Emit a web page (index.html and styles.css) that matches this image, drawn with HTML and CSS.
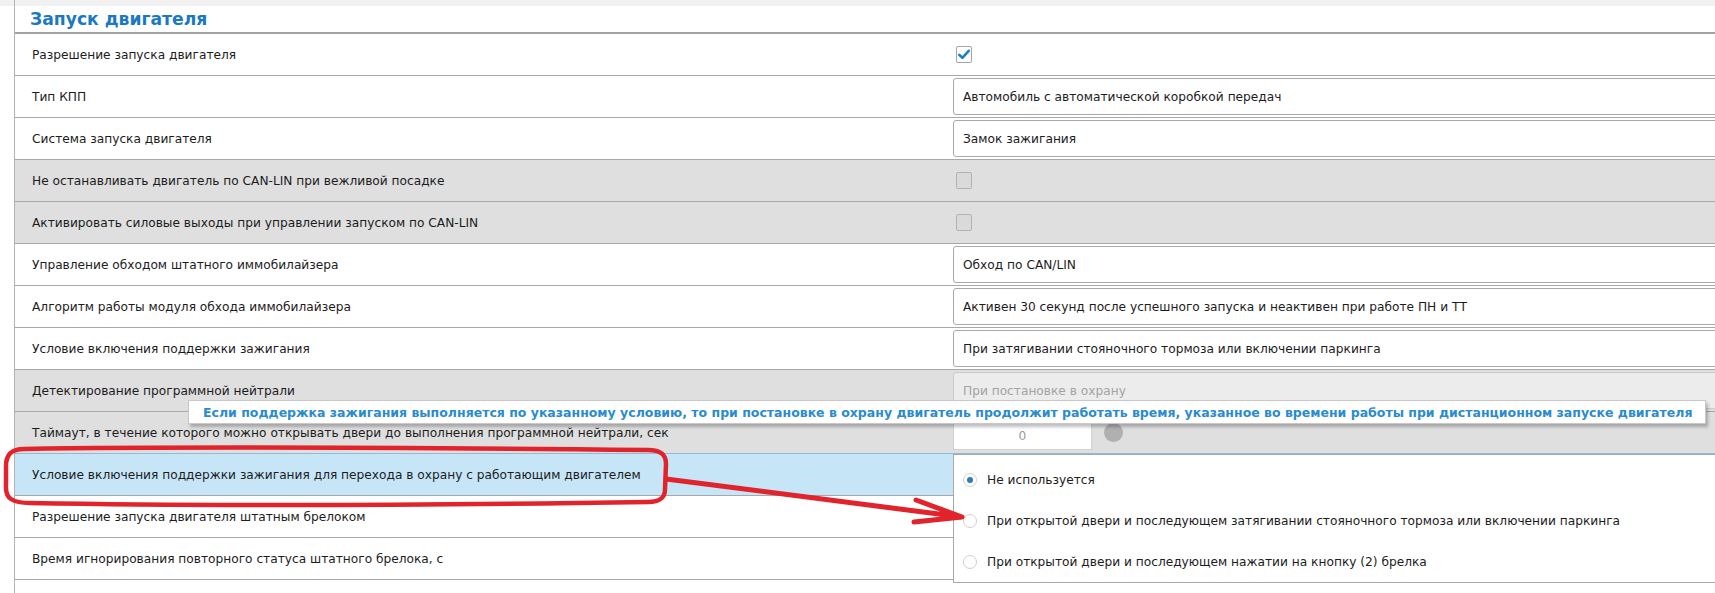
FILE: index.html
```html
<!DOCTYPE html>
<html lang="ru">
<head>
<meta charset="utf-8">
<title>Запуск двигателя</title>
<link rel="stylesheet" href="styles.css">
</head>
<body>
<div class="frame">
  <div class="topstrip"></div>
  <div class="section-title">Запуск двигателя</div>

  <div class="row">
    <div class="label">Разрешение запуска двигателя</div>
    <div class="value">
      <span class="check checked">
        <svg viewBox="0 0 16 16" width="15" height="15"><path d="M2.6 8.4 L6.2 11.8 L13.4 3.8" fill="none" stroke="#1e7fc4" stroke-width="3" stroke-linecap="round" stroke-linejoin="round"/></svg>
      </span>
    </div>
  </div>

  <div class="row">
    <div class="label">Тип КПП</div>
    <div class="value"><div class="input">Автомобиль с автоматической коробкой передач</div></div>
  </div>

  <div class="row">
    <div class="label">Система запуска двигателя</div>
    <div class="value"><div class="input">Замок зажигания</div></div>
  </div>

  <div class="row disabled">
    <div class="label">Не останавливать двигатель по CAN-LIN при вежливой посадке</div>
    <div class="value"><span class="check off"></span></div>
  </div>

  <div class="row disabled">
    <div class="label">Активировать силовые выходы при управлении запуском по CAN-LIN</div>
    <div class="value"><span class="check off"></span></div>
  </div>

  <div class="row">
    <div class="label">Управление обходом штатного иммобилайзера</div>
    <div class="value"><div class="input">Обход по CAN/LIN</div></div>
  </div>

  <div class="row">
    <div class="label">Алгоритм работы модуля обхода иммобилайзера</div>
    <div class="value"><div class="input">Активен 30 секунд после успешного запуска и неактивен при работе ПН и ТТ</div></div>
  </div>

  <div class="row">
    <div class="label">Условие включения поддержки зажигания</div>
    <div class="value"><div class="input">При затягивании стояночного тормоза или включении паркинга</div></div>
  </div>

  <div class="row disabled">
    <div class="label">Детектирование программной нейтрали</div>
    <div class="value"><div class="input input-off">При постановке в охрану</div></div>
  </div>

  <div class="row disabled pre-active">
    <div class="label">Таймаут, в течение которого можно открывать двери до выполнения программной нейтрали, сек</div>
    <div class="value">
      <div class="number">0</div>
      <span class="knob"></span>
    </div>
  </div>

  <div class="row active">
    <div class="label">Условие включения поддержки зажигания для перехода в охрану с работающим двигателем</div>
    <div class="value">
      <div class="dropdown">
        <div class="option"><span class="radio on"></span>Не используется</div>
        <div class="option"><span class="radio"></span>При открытой двери и последующем затягивании стояночного тормоза или включении паркинга</div>
        <div class="option"><span class="radio"></span>При открытой двери и последующем нажатии на кнопку (2) брелка</div>
      </div>
    </div>
  </div>

  <div class="row">
    <div class="label">Разрешение запуска двигателя штатным брелоком</div>
    <div class="value"></div>
  </div>

  <div class="row">
    <div class="label">Время игнорирования повторного статуса штатного брелока, с</div>
    <div class="value"></div>
  </div>
</div>

<div class="tooltip">Если поддержка зажигания выполняется по указанному условию, то при постановке в охрану двигатель продолжит работать время, указанное во времени работы при дистанционном запуске двигателя</div>

<svg class="annotation" width="1715" height="593" viewBox="0 0 1715 593">
  <path d="M24 449 C200 446 450 448 648 450 C661 450 666 455 666 464 L665 489 C665 498 660 502 648 502 C450 505 200 506 30 503 C12 503 6 498 6 488 L6 466 C6 455 11 449 24 449 Z" fill="none" stroke="#e1232b" stroke-width="4.5" stroke-linejoin="round"/>
  <path d="M666 479 L962 517 M916 500 L962 517 L914 522" fill="none" stroke="#e1232b" stroke-width="5" stroke-linecap="round" stroke-linejoin="round"/>
</svg>
</body>
</html>
```

FILE: styles.css
```css
* {
  box-sizing: border-box;
}

html,
body {
  margin: 0;
  padding: 0;
}

body {
  width: 1715px;
  height: 593px;
  overflow: hidden;
  position: relative;
  background: linear-gradient(#f1f1f1 0, #f1f1f1 6px, #fff 6px);
  font-family: "DejaVu Sans", Verdana, sans-serif;
  font-size: 12.2px;
  color: #1c1c1c;
}

.frame {
  margin-left: 14px;
  border-left: 1px solid #b3b3b3;
  min-height: 593px;
}

.topstrip {
  height: 6px;
  background: #f1f1f1;
}

.section-title {
  height: 28px;
  border-bottom: 2px solid #a2a2a2;
  padding-left: 15px;
  display: flex;
  align-items: center;
  font-weight: bold;
  font-size: 17.2px;
  color: #1b79c2;
  background: #fff;
}

.row {
  display: grid;
  grid-template-columns: 938px minmax(0, 1fr);
  height: 42px;
  border-bottom: 1px solid #a8a8a8;
  background: #fff;
}

.row.disabled {
  background: #dfdfdf;
}

.row.pre-active {
  border-bottom-color: #8fbbd8;
}

.row.active {
  background: #c6e6f8;
}

.label {
  padding-left: 17px;
  display: flex;
  align-items: center;
  white-space: nowrap;
}

.value {
  position: relative;
  display: flex;
  align-items: center;
}

.input {
  flex-shrink: 0;
  width: 900px;
  height: 37px;
  border: 1px solid #a9a9a9;
  border-radius: 3px;
  padding-left: 9px;
  display: flex;
  align-items: center;
  background: #fff;
  white-space: nowrap;
}

.input-off {
  background: #ececec;
  border-color: #cbcbcb;
  color: #a3a3a3;
}

.check {
  margin-left: 3px;
  width: 16px;
  height: 17px;
  border: 1px solid #a5a5a5;
  border-radius: 2px;
  background: #fff;
  display: flex;
  align-items: center;
  justify-content: center;
}

.check.off {
  background: #dadada;
  border-color: #b2b2b2;
}

.number {
  width: 139px;
  height: 28px;
  border: 1px solid #d2d2d2;
  background: #fff;
  display: flex;
  align-items: center;
  justify-content: center;
  color: #999;
  margin-top: 6px;
}

.knob {
  margin-left: 12px;
  width: 19px;
  height: 19px;
  border-radius: 50%;
  background: #b0b0b0;
}

.dropdown {
  position: absolute;
  top: 0;
  left: 0;
  width: 900px;
  height: 129px;
  background: #fff;
  border: 1px solid #a9a9a9;
  padding-top: 4px;
  z-index: 2;
}

.option {
  height: 41px;
  display: flex;
  align-items: center;
  padding-left: 9px;
  white-space: nowrap;
}

.radio {
  width: 14px;
  height: 14px;
  border-radius: 50%;
  border: 1px solid #d0d0d0;
  background: #fff;
  margin-right: 10px;
  display: flex;
  align-items: center;
  justify-content: center;
}

.radio.on::after {
  content: "";
  width: 6px;
  height: 6px;
  border-radius: 50%;
  background: #2b7bbd;
}

.tooltip {
  position: absolute;
  left: 188px;
  top: 400px;
  width: 1518px;
  height: 24px;
  background: #fff;
  border: 1px solid #c8c8c8;
  box-shadow: 2px 3px 3px rgba(0, 0, 0, 0.25);
  padding-left: 14px;
  display: flex;
  align-items: center;
  font-weight: bold;
  font-size: 12.5px;
  color: #2a8bcd;
  white-space: nowrap;
  z-index: 3;
}

.annotation {
  position: absolute;
  left: 0;
  top: 0;
  pointer-events: none;
  z-index: 4;
}
```
